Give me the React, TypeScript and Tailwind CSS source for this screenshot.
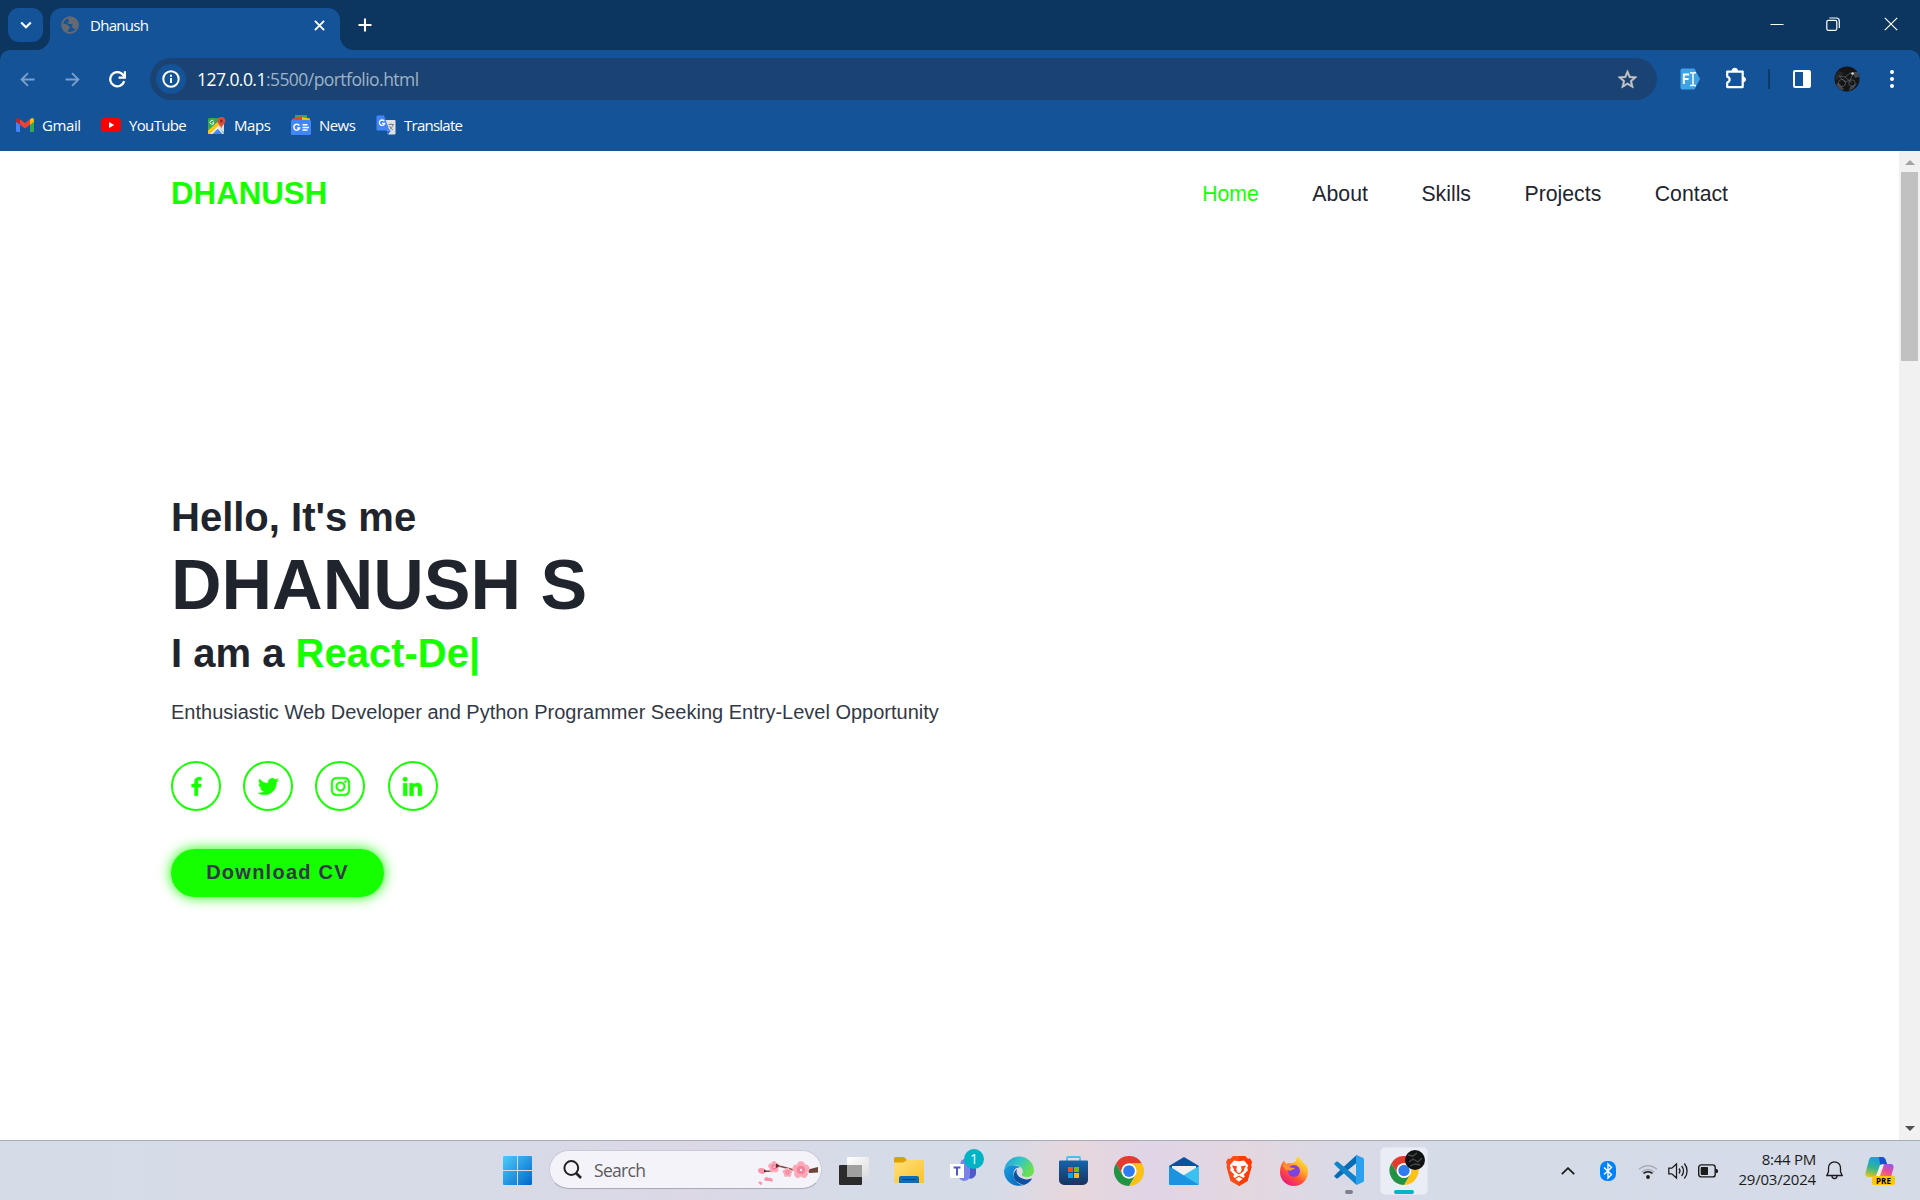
import React from "react";
import {
  BiLogoFacebook,
  BiLogoTwitter,
  BiLogoInstagram,
  BiLogoLinkedin,
} from "react-icons/bi";

const GREEN = "#16ff00";

function Chrome({ className }: { className: string }) {
  return (
    <svg viewBox="0 0 48 48" className={className}>
      <path fill="#e33b2e" d="M3.2 12A24 24 0 0 1 44.8 12H24a12 12 0 0 0-10.4 18z" />
      <path fill="#fbc116" d="M44.8 12A24 24 0 0 1 24 48l10.4-18A12 12 0 0 0 24 12z" />
      <path fill="#229342" d="M24 48A24 24 0 0 1 3.2 12l10.4 18A12 12 0 0 0 34.4 30z" />
      <circle cx="24" cy="24" r="12" fill="#fff" />
      <circle cx="24" cy="24" r="9.4" fill="#2f7cf0" />
    </svg>
  );
}

function Slot({ children }: { children: React.ReactNode }) {
  return <div className="flex h-full w-[55px] shrink-0 items-center justify-center">{children}</div>;
}

function TabStrip() {
  return (
    <div className="flex h-[50px] shrink-0 items-stretch bg-[#0c355f] text-white">
      <div className="mt-2 ml-2 flex h-[34px] w-[35px] items-center justify-center rounded-[11px] bg-[#155399]">
        <svg viewBox="0 0 12 8" className="h-2 w-3" fill="none" stroke="#fff" strokeWidth="2.2">
          <path d="M1.2 1.5 6 6.2l4.8-4.7" />
        </svg>
      </div>
      <svg viewBox="0 0 14 14" className="-ml-[7px] mr-0 h-3.5 w-3.5 self-end">
        <path d="M14 0v14H0A14 14 0 0 0 14 0z" fill="#155399" />
      </svg>
      <div className="mt-2 flex w-[290px] items-center rounded-t-[12px] bg-[#155399] pb-[8px] pl-[11px] pr-[15px]">
        <svg viewBox="0 0 18 18" className="h-[18px] w-[18px]">
          <circle cx="9" cy="9" r="7.9" fill="none" stroke="#666a70" strokeWidth="1.9" />
          <path fill="#666a70" d="M1.2 7.8 5 8l3 2.2 1 2-2 1.2v3L3 14.600 1 10zM8 1l5.500 1.500L16.600 7l.4 3-2 3-3-.8-1.500-2.400L12 8H8L6.300 6.700 8 5 7 3z" />
        </svg>
        <span className="ml-[11px] text-[15px] leading-5 tracking-[-0.7px]">Dhanush</span>
        <svg viewBox="0 0 12 12" className="ml-auto h-[11px] w-[11px]" stroke="#fff" strokeWidth="2">
          <path d="m1 1 10 10M11 1 1 11" />
        </svg>
      </div>
      <svg viewBox="0 0 14 14" className="h-3.5 w-3.5 self-end">
        <path d="M0 0v14h14A14 14 0 0 1 0 0z" fill="#155399" />
      </svg>
      <svg viewBox="0 0 14 14" className="ml-[4px] mt-[18px] h-[14px] w-[14px]" stroke="#fff" strokeWidth="2.1">
        <path d="M7 .5v13M.5 7h13" />
      </svg>
      <div className="ml-auto mt-[17px] flex">
        <svg viewBox="0 0 14 14" className="h-[14px] w-[14px]" stroke="#fff" strokeWidth="1">
          <path d="M.5 7.500h13" />
        </svg>
        <svg viewBox="0 0 14 14" className="ml-[42px] mr-[44px] h-[14px] w-[14px]" fill="none" stroke="#fff" strokeWidth="1.200">
          <rect x=".8" y="3.300" width="10" height="10" rx="1.500" />
          <path d="M3.300 1h7A3 3 0 0 1 13.300 4v7" />
        </svg>
        <svg viewBox="0 0 14 14" className="mr-[22px] h-[14px] w-[14px]" stroke="#fff" strokeWidth="1.200">
          <path d="m.8.800 12.400 12.400M13.200.800.800 13.200" />
        </svg>
      </div>
    </div>
  );
}

function Toolbar() {
  return (
    <div className="flex h-[58px] shrink-0 items-center">
      <svg viewBox="0 0 16 16" className="ml-5 h-[15px] w-[15px]" fill="none" stroke="#7b9fca" strokeWidth="2">
        <path d="M15.500 8H2M8.500 1.200 1.700 8l6.800 6.800" />
      </svg>
      <svg viewBox="0 0 16 16" className="ml-[30px] h-[15px] w-[15px]" fill="none" stroke="#7b9fca" strokeWidth="2">
        <path d="M.5 8H14M7.500 1.200 14.300 8l-6.800 6.800" />
      </svg>
      <svg viewBox="0 0 16 16" className="ml-[29px] h-[17px] w-[17px]" fill="none" stroke="#fff" strokeWidth="2.200">
        <path d="M14.300 9.600A6.700 6.700 0 1 1 13 3.400l1.700 1.900" />
        <path d="M15 .3v6H9" />
      </svg>
      <div className="ml-[24px] flex h-[42px] w-[1507px] items-center rounded-full bg-[#1a4373] pl-[6px]">
        <div className="flex h-[30px] w-[30px] items-center justify-center rounded-full bg-[#155399]">
          <svg viewBox="0 0 18 18" className="h-[18px] w-[18px]" fill="none" stroke="#fff" strokeWidth="2">
            <circle cx="9" cy="9" r="7.700" />
            <path d="M9 8v5M9 4.700v2" />
          </svg>
        </div>
        <span className="ml-[11px] text-[17.5px] leading-6 tracking-[-0.55px] text-[#9fb2c8]">
          <span className="text-white">127.0.0.1</span>:5500/portfolio.html
        </span>
        <svg viewBox="0 0 24 24" className="ml-auto mr-[18px] h-[23px] w-[23px]" fill="#c6c6c6" stroke="#c6c6c6" strokeWidth=".5">
          <path d="m22 9.240-7.190-.62L12 2 9.190 8.630 2 9.240l5.460 4.730L5.820 21 12 17.270 18.180 21l-1.630-7.030zM12 15.400l-3.760 2.270 1-4.280-3.320-2.880 4.380-.38L12 6.100l1.710 4.040 4.380.38-3.320 2.880 1 4.280z" />
        </svg>
      </div>
      <svg viewBox="0 0 22 22" className="ml-[22px] h-[22px] w-[22px]">
        <path d="M3 .6h12.500L21 11l-5.500 10.400H3A2 2 0 0 1 1.500 20V2.500A2 2 0 0 1 3 .6z" fill="#3ea2e5" />
        <path d="M4.800 16V6.500h5.400M4.800 11h4.800" fill="none" stroke="#fff" strokeWidth="1.900" />
        <path d="M11 4.700h2l1 .8 1-.8h2M11 17.500h2l1-.8 1 .8h2M14 5v12" fill="none" stroke="#fff" strokeWidth="1.500" />
      </svg>
      <svg viewBox="0 0 24 24" className="ml-[22px] h-[24px] w-[24px]" fill="#fff">
        <path d="M4.200 4.600h15.500v15.500H4.200v-4.500c3.200-1 3.200-5 0-6z" fill="none" stroke="#fff" strokeWidth="2.200" strokeLinejoin="round" />
        <path d="M9 4a2.600 2.600 0 0 1 5.600 0zM20 10a2.500 2.500 0 0 1 0 5z" stroke="#fff" />
      </svg>
      <div className="ml-[21px] h-5 w-[2px] bg-[#0e3a68]" />
      <div className="ml-[23px] flex h-[18px] w-[18px] rounded-[2px] border-2 border-white">
        <div className="ml-auto w-[6px] bg-white" />
      </div>
      <svg viewBox="0 0 26 26" className="ml-[23px] h-[26px] w-[26px]">
        <circle cx="13" cy="13" r="12.500" fill="#141516" />
        <path d="M1 13a12 12 0 0 1 4-8l5 2-3 4-5 4z" fill="#242628" />
        <path d="M18 6h6l1 5-4 1zM2 18c5-3 5 5 9 5l-3 1c-3-1-5-3-6-6zM16 21l7-4-3 5-5 3z" fill="#44464a" />
        <g fill="none" stroke="#5b5e62" strokeWidth=".8">
          <circle cx="8" cy="17" r="3.600" />
          <circle cx="18" cy="17" r="3.200" />
          <path d="m5 10 6 1 5-4 3 1-3 6-5 2zM11 11l7 6" />
        </g>
        <circle cx="18.500" cy="7.500" r="1.300" fill="#d5d6d8" />
      </svg>
      <div className="ml-[30px] flex flex-col gap-[3px]">
        <div className="h-1 w-1 rounded-full bg-white" />
        <div className="h-1 w-1 rounded-full bg-white" />
        <div className="h-1 w-1 rounded-full bg-white" />
      </div>
    </div>
  );
}

function Bookmarks() {
  return (
    <div className="flex h-[43px] shrink-0 items-start pt-[7px] pl-4 text-[15px] leading-5 text-white">
      <div className="flex w-[85px] items-center">
        <svg viewBox="0 0 18 14" className="mr-2 h-[14px] w-[18px]">
          <path d="M0 2.500 4 5.300V14H1.300A1.300 1.300 0 0 1 0 12.700z" fill="#4285f4" />
          <path d="M18 2.500 14 5.300V14h2.700a1.300 1.300 0 0 0 1.300-1.300z" fill="#34a853" />
          <path d="M14 1.300 15.200.4C16.500-.5 18 .4 18 2v1.800L14 6.800z" fill="#fbbc04" />
          <path d="M4 6.800V1.300L9 5l5-3.700v5.500l-5 3.700z" fill="#ea4335" />
          <path d="M0 2C0 .4 1.500-.5 2.800.4L4 1.300v5.500L0 3.800z" fill="#c5221f" />
        </svg>
        <span className="tracking-[-0.4px]">Gmail</span>
      </div>
      <div className="flex w-[106px] items-center">
        <svg viewBox="0 0 20 14" className="mr-2 h-[14px] w-5">
          <rect width="20" height="14" rx="3.500" fill="#f00" />
          <path d="m8 4 5.200 3L8 10z" fill="#fff" />
        </svg>
        <span className="tracking-[-0.65px]">YouTube</span>
      </div>
      <div className="flex w-[84px] items-center">
        <svg viewBox="0 0 19 19" className="mr-2 h-[19px] w-[19px]">
          <rect x="1" y="2" width="16" height="16" rx="1.500" fill="#34a853" />
          <path d="m9 10 8 6.500V7z" fill="#d8dde3" />
          <path d="M2 18 10 9.500l7 8.500z" fill="#4a87ee" />
          <path d="M1 14.500 11 5.500l2.500 2.500L4 18H1z" fill="#fbc515" />
          <path d="m3 18 8-8 6 8z" fill="#eceef0" />
          <path d="m5.500 18 5.300-5.300 4.700 5.300z" fill="#4a87ee" />
          <path d="M14.300 1a4 4 0 0 1 4 4c0 3-3.300 4-4 7.500C13.600 9 10.300 8 10.300 5a4 4 0 0 1 4-4z" fill="#dd4b3e" />
          <circle cx="14.300" cy="5" r="1.400" fill="#7c2c26" />
          <path d="M6.700 5.200a2 2 0 1 0 .3 1.600H5.200" fill="none" stroke="#fff" strokeWidth=".9" />
        </svg>
        <span className="tracking-[-0.4px]">Maps</span>
      </div>
      <div className="flex w-[85px] items-center">
        <svg viewBox="0 0 20 20" className="mr-2 h-5 w-5">
          <path d="M4 0h12v6H4z" fill="#34a853" />
          <path d="m8 1.500 11 2V8H7z" fill="#fbbc04" />
          <path d="M1 3.800 11 1v5H1z" fill="#ea4335" />
          <rect y="5" width="20" height="15" rx="1.200" fill="#4285f4" />
          <path d="M8.300 10.500a3 3 0 1 0 .4 2.400H6M11.500 9.700h5M11.500 12.400h6.500M11.500 15.100h5" fill="none" stroke="#fff" strokeWidth="1.500" />
        </svg>
        <span className="tracking-[-0.55px]">News</span>
      </div>
      <div className="flex items-center">
        <svg viewBox="0 0 20 20" className="mr-2 h-5 w-5">
          <path d="M8 5h10.500a1 1 0 0 1 1 1v12.500a1 1 0 0 1-1 1H12z" fill="#dfe2e5" />
          <path d="M10.500 15.500 12 19.500l3-4z" fill="#3367d6" />
          <path d="M1.500.500H8l5.500 15h-12A1 1 0 0 1 .5 14.500v-13a1 1 0 0 1 1-1z" fill="#4285f4" />
          <path d="M8.300 6.200a2.700 2.700 0 1 0 .4 2.100H6" fill="none" stroke="#fff" strokeWidth="1.300" />
          <path d="M12.500 9.500h5.500M15 8.500v1M17 9.500c-.5 2.500-2 4-3.500 5M13.500 11c.8 1.800 2 3 3.500 4" fill="none" stroke="#7c8288" />
        </svg>
        <span className="tracking-[-0.75px]">Translate</span>
      </div>
    </div>
  );
}

const socials = [BiLogoFacebook, BiLogoTwitter, BiLogoInstagram, BiLogoLinkedin];

function Portfolio() {
  return (
    <div className="flex min-h-0 flex-1 bg-white font-['Liberation_Sans',sans-serif] text-[#1f242d]">
      <div className="flex flex-1 flex-col px-[171px]">
        <header className="flex h-[86px] items-center justify-between">
          <span className="text-[31.25px] font-bold leading-9 text-[#16ff00]">DHANUSH</span>
          <nav className="flex gap-[53.5px] pb-px text-[21.25px] leading-6">
            <a className="text-[#16ff00]">Home</a>
            <a>About</a>
            <a>Skills</a>
            <a>Projects</a>
            <a>Contact</a>
          </nav>
        </header>
        <main className="flex flex-col pt-[257px]">
          <h3 className="text-[40px] font-bold leading-[46px]">Hello, It's me</h3>
          <h1 className="text-[70px] font-bold leading-[91px]">DHANUSH S</h1>
          <h3 className="-mt-px text-[40px] font-bold leading-[46px]">
            I am a <span className="text-[#16ff00]">React-De</span>
            <span className="text-[#16ff00]">|</span>
          </h3>
          <p className="mt-[21px] text-[20px] leading-[30px] text-[#323946]">
            Enthusiastic Web Developer and Python Programmer Seeking Entry-Level Opportunity
          </p>
          <div className="mt-[34px] flex gap-[22.2px]">
            {socials.map((Icon, i) => (
              <div key={i} className="flex h-[50px] w-[50px] items-center justify-center rounded-full border-2 border-[#16ff00]">
                <Icon size={25} color={GREEN} stroke={GREEN} strokeWidth={0.4} />
              </div>
            ))}
          </div>
          <button className="mt-[38px] flex h-12 w-[213px] items-center justify-center rounded-full bg-[#16ff00] pb-[2px] text-[20px] font-bold tracking-[1.25px] text-[#323946] shadow-[0_0_12.5px_#16ff00]">
            Download CV
          </button>
        </main>
      </div>
      <div className="flex w-[21px] flex-col items-center bg-[#f1f1f1]">
        <svg viewBox="0 0 10 5" className="mt-[9px] h-[5px] w-[10px]"><path d="m0 5 5-5 5 5z" fill="#a3a3a3" /></svg>
        <div className="mt-[7px] h-[189px] w-[17px] bg-[#c1c1c1]" />
        <svg viewBox="0 0 10 5" className="mb-[9px] mt-auto h-[5px] w-[10px]"><path d="m0 0 5 5 5-5z" fill="#505050" /></svg>
      </div>
    </div>
  );
}

function Blossom() {
  const flower = (x: number, y: number, r: number) => (
    <g key={x}>
      {[0, 72, 144, 216, 288].map((a) => (
        <circle key={a} cx={x} cy={y - r * 0.56} r={r * 0.42} fill="#fba9b8" transform={`rotate(${a} ${x} ${y})`} />
      ))}
      <circle cx={x} cy={y} r={r * 0.45} fill="#f6809c" />
      <circle cx={x} cy={y} r={r * 0.14} fill="#fde8ec" />
    </g>
  );
  return (
    <svg viewBox="0 0 62 26" className="mt-2 h-[26px] w-[62px]">
      <path d="M5 10.500 15 10l7-5 8 2 10 3 10-1" fill="none" stroke="#7a4a40" strokeWidth="1.600" />
      <path d="M51 8.500 61 6v5.500l-9 .5z" fill="#6b443a" />
      {flower(17, 6, 6)}
      {flower(30.500, 11.500, 5)}
      {flower(44, 9, 9)}
      <path d="M1 8.500c3-3 7-1 8 1.500-1 4-6 4-8 0z" fill="#f796aa" />
      <path d="M2 20.500c2 0 4 1 3 3-2 1-4-1-3-3zM7 19c1-4 4-3 4-2 4-1 6 2 4 4-2-2-5 0-8-2z" fill="#f995a8" />
      <path d="M19 2.500 23 5l-4 2zM7 8.500l3 1.500-3 1.500z" fill="#5b2e33" />
    </svg>
  );
}

function Taskbar() {
  return (
    <div className="flex h-[60px] shrink-0 border-t border-[#a9abb8] bg-[linear-gradient(90deg,#d5dce8_0%,#d7dae7_26%,#dcd8e6_36%,#d6dbe8_44%,#d6dbe8_52%,#e7d7dd_56%,#dfd5e6_60%,#e3d7e0_65%,#d9dae6_70%,#d4dce8_76%,#d6dbe8_100%)] text-[#1b1b1b]">
      <div className="flex w-[549px] items-center justify-end pr-[17px]">
        <svg viewBox="0 0 29 29" className="h-[29px] w-[29px]">
          <defs>
            <linearGradient id="win" x1="0" y1="0" x2="1" y2="1">
              <stop offset="0" stopColor="#4ecbfc" /><stop offset="1" stopColor="#0067c9" />
            </linearGradient>
          </defs>
          <path d="M1 0h13v14H0V1a1 1 0 0 1 1-1zM15 0h13a1 1 0 0 1 1 1v13H15zM0 15h14v14H1a1 1 0 0 1-1-1zM15 15h14v13a1 1 0 0 1-1 1H15z" fill="url(#win)" />
        </svg>
      </div>
      <div className="mt-[9px] flex h-[39px] w-[273px] items-center rounded-full border border-[#cbc9d8] border-b-[#aaa9b6] bg-[#f4f3f9] pl-[13px] pr-[2px]">
        <svg viewBox="0 0 19 19" className="h-[19px] w-[19px]" fill="none" stroke="#222">
          <circle cx="8.300" cy="8" r="6.900" strokeWidth="2" />
          <path d="m13 13 5 5" strokeWidth="2.600" />
        </svg>
        <span className="ml-[12px] text-[17.5px] leading-6 tracking-[-0.7px] text-[#5b5b60]">Search</span>
        <div className="ml-auto"><Blossom /></div>
      </div>
      <div className="flex pl-[4px]">
        <Slot>
          <svg viewBox="0 0 30 28" className="h-[28px] w-[30px]">
            <defs>
              <linearGradient id="tv" x1="0" y1="0" x2="1" y2="1"><stop offset="0" stopColor="#fff" /><stop offset="1" stopColor="#dcdcdc" /></linearGradient>
            </defs>
            <rect y="8" width="23" height="20" rx="1" fill="#2b2b2b" />
            <rect x="8" width="22" height="20" rx="1" fill="url(#tv)" />
            <path d="M8 8h15v12H8z" fill="#a0a0a0" />
          </svg>
        </Slot>
        <Slot>
          <svg viewBox="0 0 30 27" className="h-[27px] w-[30px]">
            <defs>
              <linearGradient id="fo" x1="0" y1="0" x2="1" y2="1"><stop offset="0" stopColor="#ffe07a" /><stop offset="1" stopColor="#fcc22d" /></linearGradient>
            </defs>
            <path d="M1.500 0H10l3 3h14v8H0V1.500A1.500 1.500 0 0 1 1.500 0z" fill="#dfa007" />
            <path d="M0 5.500h9l4-2.500h16a1 1 0 0 1 1 1V26H0z" fill="url(#fo)" />
            <path d="M5 26v-5a2 2 0 0 1 2-2h16a2 2 0 0 1 2 2v5z" fill="#0f6cb6" />
            <path d="M8.500 22.500h13" stroke="#08406f" />
          </svg>
        </Slot>
        <Slot>
          <div className="relative ml-[7px] flex h-[23px] w-[34px]">
            <svg viewBox="0 0 27 23" className="h-[23px] w-[27px]">
              <path d="M18 8h8v7a5.500 5.500 0 0 1-8 4z" fill="#5059c9" />
              <circle cx="15" cy="4.500" r="4.500" fill="#7b83eb" />
              <path d="M9 8h11v9a6 6 0 0 1-11 2z" fill="#7b83eb" />
              <rect y="5" width="14" height="14" fill="#fff" />
              <path d="M3.500 8.500h7M7 8.500v8" stroke="#5059c9" strokeWidth="2" />
            </svg>
            <span className="absolute left-[14px] top-[-10px] flex h-5 w-5 items-center justify-center rounded-full bg-[#00b4c4] text-[14px] leading-5 text-white">1</span>
          </div>
        </Slot>
        <Slot>
          <svg viewBox="0 0 30 30" className="h-[30px] w-[30px]">
            <defs>
              <linearGradient id="e1" x1="0" y1="0" x2="1" y2=".5"><stop offset="0" stopColor="#229bd9" /><stop offset=".5" stopColor="#33c6c8" /><stop offset="1" stopColor="#6de04a" /></linearGradient>
              <linearGradient id="e2" x1="0" y1="0" x2="1" y2="1"><stop offset="0" stopColor="#1c9de2" /><stop offset="1" stopColor="#0664b8" /></linearGradient>
            </defs>
            <path d="M.3 13A15 15 0 0 1 30 14c0 5-3.500 7-7 7-4 0-6-1.500-5-3 1.500-2 1-4-.500-6C14 8 5 8 .3 13z" fill="url(#e1)" />
            <path d="M0 14.500C2 8 12 8 16 11.500c-5-.5-7 4-6.500 8 .5 5 5 9.500 11 9.300A15 15 0 0 1 0 14.500z" fill="url(#e2)" />
            <path d="M13 13c-6 5-4 14 7 16 3-1 6-3 8-6.200-.5-.8-2.500.8-6 .6C16 23 11 19 13 13z" fill="#10509e" />
          </svg>
        </Slot>
        <Slot>
          <svg viewBox="0 0 29 29" className="h-[29px] w-[29px]">
            <defs>
              <linearGradient id="st" x1="0" y1="0" x2="0" y2="1"><stop offset="0" stopColor="#1564ad" /><stop offset="1" stopColor="#18335c" /></linearGradient>
            </defs>
            <path d="M8 6V2a1 1 0 0 1 1-1h11a1 1 0 0 1 1 1v4" fill="none" stroke="#3fc3f5" strokeWidth="1.800" />
            <path d="M1 4.500h27a1 1 0 0 1 1 1V24a5 5 0 0 1-5 5H5a5 5 0 0 1-5-5V5.500a1 1 0 0 1 1-1z" fill="url(#st)" />
            <path d="M9 11h5v5H9z" fill="#f25022" /><path d="M15 11h5v5h-5z" fill="#7fba00" />
            <path d="M9 17h5v5H9z" fill="#00a4ef" /><path d="M15 17h5v5h-5z" fill="#ffb900" />
          </svg>
        </Slot>
        <Slot><Chrome className="h-[30px] w-[30px]" /></Slot>
        <Slot>
          <svg viewBox="0 0 30 28" className="h-[28px] w-[30px]">
            <path d="M0 9 15 0l15 9v6H0z" fill="#0a51a1" />
            <path d="M3 9h24v5L15 22 3 14z" fill="#f1efef" />
            <path d="M30 9v18a1 1 0 0 1-1 1H1l14-10z" fill="#3cc0ef" />
            <path d="M0 9l29.500 18.700L29 28H1a1 1 0 0 1-1-1z" fill="#1c93de" />
          </svg>
        </Slot>
        <Slot>
          <svg viewBox="0 0 26 30" className="h-[30px] w-[26px]">
            <path d="M7 0h12l3 3 2-.5L26 6l-1 3 .5 2-4 14-8.500 5-8.500-5-4-14L1 9 0 6l2-3.500L4 3z" fill="#fb4b18" />
            <path d="m19 0 3 3 2-.5L26 6l-1 3 .5 2-4 14-8.500 5V0z" fill="#ff3a06" />
            <path d="M8 4.500 13 5.300l5-.8 4.300 5-1 2 .5 3-4 4 1 2-1.500 1.500L13 19.500l-4.300 2.500L7.200 20.500l1-2-4-4 .5-3-1-2z" fill="#fff" />
            <path d="m6 9.500 5 .8-.7 3.200 1 2.700L13 17l1.700-.8 1-2.700-.7-3.200 5-.8-2 4 .3 1L15.500 17l-2.500 1.500L10.500 17l-2.800-2.500.3-1z" fill="#fb4b18" />
            <path d="M12 8h2l-.2 6.500L13 15.500l-.8-1z" fill="#fff" />
            <path d="m9.500 23 3.500-2.300 3.500 2.300-3.500 2.800z" fill="#fff" />
          </svg>
        </Slot>
        <Slot>
          <svg viewBox="0 0 28 30" className="h-[30px] w-[28px]">
            <defs>
              <linearGradient id="ff" x1=".9" y1="0" x2=".2" y2="1"><stop offset="0" stopColor="#fff04e" /><stop offset=".35" stopColor="#ffb32c" /><stop offset=".65" stopColor="#ff5038" /><stop offset="1" stopColor="#e3128b" /></linearGradient>
              <radialGradient id="fg"><stop offset="0" stopColor="#6a4be8" /><stop offset="1" stopColor="#8c3bd8" /></radialGradient>
            </defs>
            <path d="M4 4.500 6 8c1-.8 2.500-1 3.500-1C12 7 14 7 16 5c0-2 1-4 2.500-5 .5 3 3.500 4.500 5 6.500l1 2.500 1-1.500C27.500 10 28 13 28 16a14 14 0 0 1-28 0c0-5 1.500-8.500 4-11.500z" fill="url(#ff)" />
            <circle cx="14" cy="15" r="6" fill="url(#fg)" />
            <path d="M2.500 9.500 6 8l4 3.500 5 .5c-.5 1.500-3.500 1.500-4.500 2.700-2 0-3-1-5-1z" fill="#ff952d" />
          </svg>
        </Slot>
        <Slot>
          <div className="flex h-full flex-col items-center pt-[14px]">
            <svg viewBox="0 0 30 30" className="h-[30px] w-[30px]">
              <path d="m22 .5-18.500 17L.8 20.200a1.200 1.200 0 0 0 0 1.800l1.500 1.200c.5.400 1 .4 1.600 0L22.500 8z" fill="#0a6cb3" />
              <path d="m22 29.500-18.500-17L.8 9.800A1.200 1.200 0 0 1 .8 8l1.500-1.200c.5-.4 1-.4 1.600 0L22.500 22z" fill="#1183cb" />
              <path d="M22 0c0 0 1 0 1.700.4l5 2.400c.8.400 1.300 1.200 1.300 2v20.400c0 .8-.5 1.600-1.300 2l-5 2.400c-.7.400-1.700.4-1.700.4z" fill="#2ba0ee" />
            </svg>
            <div className="mt-[5px] h-1 w-2 rounded-full bg-[#808089]" />
          </div>
        </Slot>
        <Slot>
          <div className="relative flex h-12 w-12 flex-col items-center rounded-[5px] border border-[#e4e6f0] bg-[#ebedf6] pt-2">
            <Chrome className="h-[30px] w-[30px]" />
            <div className="mt-[5px] h-1 w-5 shrink-0 rounded-full bg-[#07b4c6]" />
            <svg viewBox="0 0 20 20" className="absolute right-[2px] top-[2px] h-5 w-5">
              <circle cx="10" cy="10" r="10" fill="#101112" />
              <path d="m3 5 5 1 4-3M4 12l4-3 5 3 4-4M5 16l5-2 5 1" fill="none" stroke="#47494c" strokeWidth="1.300" />
            </svg>
          </div>
        </Slot>
      </div>
      <div className="ml-auto flex items-center">
        <svg viewBox="0 0 14 8" className="h-2 w-[14px]" fill="none" stroke="#1b1b1b" strokeWidth="1.800"><path d="m.8 7.200L7 1.200l6.200 6" /></svg>
        <svg viewBox="0 0 16 20" className="ml-[25px] h-5 w-4">
          <rect width="16" height="20" rx="7" fill="#0082fc" />
          <path d="m4 6.500 7.500 7L8 17V3l3.500 3.500-7.500 7" fill="none" stroke="#fff" strokeWidth="1.400" />
        </svg>
        <svg viewBox="0 0 20 16" className="ml-[22px] h-4 w-5" fill="none" strokeWidth="1.500">
          <path d="M1 6.500a12.500 12.500 0 0 1 18 0M3.700 9.200a8.900 8.900 0 0 1 12.600 0" stroke="#a9adb8" />
          <path d="M5.500 10.600a6.300 6.300 0 0 1 9 0" stroke="#1b1b1b" />
          <circle cx="10" cy="14" r="1.900" fill="#1b1b1b" />
        </svg>
        <svg viewBox="0 0 20 18" className="ml-[10px] h-[18px] w-5" fill="none" stroke="#1b1b1b" strokeWidth="1.300">
          <path d="M.8 6.200h3L8.500 2v14l-4.700-4.200h-3zM11 6.500a4 4 0 0 1 0 5M13.600 4a7.500 7.500 0 0 1 0 10M16.300 1.500a11.500 11.500 0 0 1 0 15" />
        </svg>
        <svg viewBox="0 0 20 14" className="ml-[10px] h-[14px] w-5">
          <rect x=".7" y=".9" width="16.500" height="12" rx="2.500" fill="none" stroke="#1b1b1b" strokeWidth="1.400" />
          <rect x="2.700" y="3" width="7.300" height="8" rx=".8" fill="#1b1b1b" />
          <path d="M17.500 5h1a1.500 1.500 0 0 1 1.500 1.500v1A1.500 1.500 0 0 1 18.500 9h-1z" fill="#1b1b1b" />
        </svg>
        <div className="ml-5 flex w-[78px] flex-col items-end whitespace-nowrap pb-[3px] text-[15px] leading-5">
          <span className="tracking-[-0.25px]">8:44 PM</span>
          <span className="tracking-[-0.2px]">29/03/2024</span>
        </div>
        <svg viewBox="0 0 17 19" className="ml-[10px] mr-px h-[19px] w-[17px]" fill="none" stroke="#1b1b1b" strokeWidth="1.300">
          <path d="M8.500.8a6 6 0 0 0-6 6v4L.8 14.500h15.400l-1.700-3.700v-4a6 6 0 0 0-6-6zM6 15a2.500 2.500 0 0 0 5 0" />
        </svg>
        <div className="relative ml-[21px] mr-[25px] h-[28px] w-[30px]">
          <svg viewBox="0 0 30 28" className="h-[28px] w-[30px]">
            <defs>
              <linearGradient id="c1" x1=".3" y1="0" x2="0" y2="1"><stop offset="0" stopColor="#12a0e8" /><stop offset=".5" stopColor="#38b58a" /><stop offset="1" stopColor="#f8c814" /></linearGradient>
              <linearGradient id="c2" x1=".8" y1="0" x2=".2" y2="1"><stop offset="0" stopColor="#9b55e8" /><stop offset=".5" stopColor="#ea4c94" /><stop offset="1" stopColor="#fb8a3c" /></linearGradient>
            </defs>
            <path d="M7 0h10c2 0 3 1 4 4l1 3h-5l-5 13H3c-2 0-3-2-2.500-4L4 3c.5-2 1.500-3 3-3z" fill="url(#c1)" />
            <path d="M14 0h3c2 0 3 1 4 4l1 3h-5l-2 0z" fill="#1b50cc" />
            <path d="M18 7h8c2 0 3 2 2.500 4L26 20H11l1-1z" fill="url(#c2)" />
            <path d="m15 8 4-.5-4 11.500h-4z" fill="#fff" opacity=".85" />
          </svg>
          <span className="absolute bottom-0 right-0 flex h-[9px] w-[23px] items-center justify-center rounded-[2px] bg-[#ffc60a] text-[8px] font-bold leading-[9px] text-black">PRE</span>
        </div>
      </div>
    </div>
  );
}

export default function App() {
  return (
    <div className="flex h-[1200px] w-[1920px] flex-col overflow-hidden bg-[#0c355f] font-['Open_Sans','Noto_Sans',sans-serif]">
      <TabStrip />
      <div className="flex h-[101px] shrink-0 flex-col rounded-t-[10px] bg-[#155399]">
        <Toolbar />
        <Bookmarks />
      </div>
      <Portfolio />
      <Taskbar />
    </div>
  );
}
